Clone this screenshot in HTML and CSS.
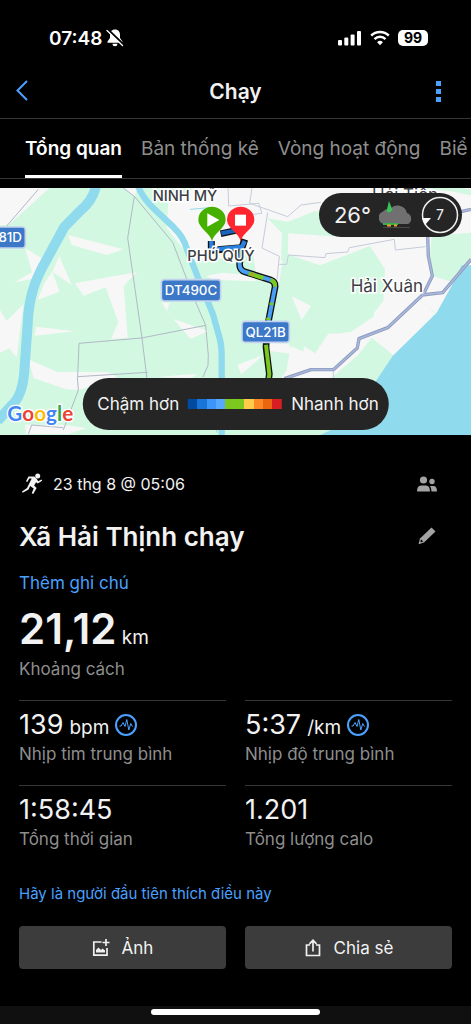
FILE: index.html
```html
<!DOCTYPE html>
<html lang="vi">
<head>
    <meta charset="UTF-8">
    <meta name="viewport" content="width=device-width, initial-scale=1.0">
    <title>Chạy</title>
    <link rel="stylesheet" href="styles.css">
</head>
<body>
    <!-- Status bar -->
    <div class="status-bar">
        <div class="status-left">
            <span>07:48</span>
            <svg width="18" height="18" viewBox="0 0 18 18">
                <path d="M9 .5c-3.200 0-5 2.200-5 5v3.500L1.500 12.600v1.200h15v-1.200L14 9V5.500c0-2.800-1.800-5-5-5zM6.500 14.800h5a2.500 2.500 0 0 1-5 0z" fill="#fff"/>
                <path d="M2 .5l15.500 15" stroke="#000" stroke-width="2"/>
                <path d="M1 1.500l15.500 15" stroke="#fff" stroke-width="1.300" stroke-linecap="round"/>
            </svg>
        </div>
        <div class="status-right">
            <svg width="24" height="16" viewBox="0 0 24 16" fill="#fff">
                <rect x="0" y="10" width="4" height="5.500" rx="1"/>
                <rect x="6.300" y="7.500" width="4" height="8" rx="1"/>
                <rect x="12.600" y="4.500" width="4" height="11" rx="1"/>
                <rect x="19" y="1" width="4" height="14.500" rx="1"/>
            </svg>
            <svg width="20" height="16" viewBox="0 0 20 16" fill="none" stroke="#fff" stroke-width="2.500">
                <path d="M1.200 5.600a12.600 12.600 0 0 1 17.600 0"/>
                <path d="M4.500 9.100a7.900 7.900 0 0 1 11 0"/>
                <path d="M10 15.200l-2.900-3a4.200 4.200 0 0 1 5.800 0z" fill="#fff" stroke="none"/>
            </svg>
            <span class="battery">99</span>
        </div>
    </div>

    <!-- Title bar -->
    <header class="nav-bar">
        <button class="icon-btn" type="button" aria-label="Quay lại">
            <svg width="28" height="22" viewBox="0 0 28 22" fill="none" stroke="#4aa1ff" stroke-width="2">
                <path d="M12 1L2.500 10.500l9.500 9.500"/>
            </svg>
        </button>
        <h1>Chạy</h1>
        <button class="icon-btn" type="button" aria-label="Thêm">
            <svg width="28" height="22" viewBox="0 0 28 22" fill="#4aa1ff">
                <rect x="8" y="1" width="5" height="5"/>
                <rect x="8" y="9" width="5" height="5"/>
                <rect x="8" y="17" width="5" height="5"/>
            </svg>
        </button>
    </header>

    <nav class="tabs">
        <a class="tab active" href="#overview">Tổng quan</a>
        <a class="tab" href="#stats">Bản thống kê</a>
        <a class="tab" href="#laps">Vòng hoạt động</a>
        <a class="tab" href="#charts">Biể</a>
    </nav>

    <!-- Map with the route, drawn at three units to the pixel -->
    <section class="map">
        <svg class="map-canvas" viewBox="0 6 1413 741" preserveAspectRatio="xMidYMid slice">
            <rect width="1413" height="750" fill="#d3f8e2"/>
            <g fill="#f8f7f7">
                <path d="M0 0h155L25 118H0z"/>
                <path d="M365 0h50l-12 32z"/>
                <path d="M204 147l116 30 50 13-50 17-105-30z"/>
                <path d="M76 187l50 30-20 60-62 12 52-30z"/>
                <path d="M178 210l37 87-58-40zM157 257l22 60-66 24 20-50z"/>
                <path d="M225 292l98-18 88-15-40 40 12 156-50 4 22-50-38-105-66 25z"/>
                <path d="M0 372l20 33 50-50-20 160-22-28-28 13z"/>
                <path d="M108 422l115 14-119 13z"/>
                <path d="M84 520l88 38 150 0 30 14-115 40-38-2-98-34z"/>
                <path d="M520 399l104 36-52 24z"/>
                <path d="M475 572l115-8-15 12z"/>
                <path d="M485 350h24l-8 25z"/>
                <path d="M75 716l110 0 75 10-55 18H78z"/>
                <path d="M505 50l90-50h818v400l-120 0-110 108-68-50-35 32-5 20-77 73-86-10-9-12 9-80 45 28v-67l95-3 70-48V250L1110 180 960 238 863 205v40l-15 15 5 62-23-30-60-9-10-80-180 25-15-20-65-82z"/>
            </g>
            <g fill="#d3f8e2">
                <path d="M803 97l62 10 80-32 30 5 45 52 15 22-170-12-2 88-20-8 3-80z"/>
                <path d="M1295 150l118-10v90l-50 60-65-20-8-60z"/>
                <path d="M1190 0h150l73 10v18l-60-12z"/>
                <path d="M1262 344l45 36-10 10-40-5z"/>
                <path d="M850 210l110 30 150-60 45 70-5 95-40 50-160 90-60-60-60-90z"/>
            </g>
            <g fill="#f8f7f7">
                <path d="M875 330l58 30-28 42z"/>
                <path d="M985 443l95-3 55-35 15-60 60 60-80 60-45 45-5 20-75 70-110-2-15-8-40-8 20-30 12-72 68 30z"/>
                <path d="M812 470l56 3 4 30-67-9z"/>
                <path d="M712 537l78-30-66 58z"/>
                <path d="M618 270l50-10 92 8 10 18-130-5z"/>
                <path d="M1195 395l70-50 40 37-125 126-65-53z"/>
            </g>
            <path d="M1115 455l65 53-55 80-30 150H960l20-150 95-82z" fill="#d3f8e2"/>
            <!-- Water -->
            <g fill="none" stroke="#90daee" stroke-linejoin="round">
                <path d="M288 0q-10 45-48 75l-47 48-50 92q-35 60-45 100-13 45-15 100l-10 140q-5 75-40 105l-40 45" stroke-width="30"/>
                <path d="M414 0q15 38 50 70l58 55q30 30 37 60l35 90 45 110 18 65q8 25 8 60v240" stroke-width="19"/>
                <path d="M570 70l60-5" stroke-width="3"/>
            </g>
            <path d="M1413 238h-28l-25 52-50 90-132 130-50 75-28 60-60 65-90 42h463z" fill="#90daee"/>
            <!-- Minor roads -->
            <g fill="none" stroke="#b0b9c6" stroke-width="3">
                <path d="M370 6l33 25-20 125 43 300 18 147M403 31l115 138 68 177 31 72-192 38-188 16-4 100 210-13M115 10L20 120M617 418l8 90-1 30-15 35M232 572l3 40-45 120M85 745l10-28 95 8"/>
            </g>
            <g fill="none" stroke="#c5ccda" stroke-width="3">
                <path d="M684 0l2 60 90-8 10 30-82 10M757 0l-8 52 114 40 40-35 60-8M803 80l-17 106 52 25-8 80M838 235h22l5-28 110 8 3-12 65-5 5-13 135-25 3 32 90-10M1000 550v30M650 740v-30"/>
            </g>
            <!-- Main road -->
            <g fill="none" stroke="#8c9ac0" stroke-width="10" stroke-linejoin="round">
                <path d="M1283 150l2 60 12 60-27 55-107 100-86 33-5 28-72 65h-67l-80 27M1265 327l63-7 85-100M1370 80l43-10"/>
                <path d="M1283 150l2 60 12 60-27 55-107 100-86 33-5 28-72 65h-67l-80 27M1265 327l63-7 85-100M1370 80l43-10" stroke="#a9b7d9" stroke-width="5"/>
            </g>
            <!-- Route -->
            <g fill="none" stroke-linejoin="round">
                <path d="M662 143l55-12" stroke="#111" stroke-width="20"/>
                <path d="M664 142l50-10" stroke="#1765bd" stroke-width="13"/>
                <path d="M634 165v28l92-8 8-25" stroke="#111" stroke-width="21"/>
                <path d="M634 165v26l92-8 8-18" stroke="#2a80dd" stroke-width="13"/>
                <path d="M724 190l-5 42q-2 20 17 26l76 24q15 5 13 22l-25 130-2 50 10 80-4 30" stroke="#111" stroke-width="20"/>
                <path d="M724 190l-5 42q-2 20 17 26l76 24q15 5 13 22l-25 130-2 36" stroke="#4a9ff5" stroke-width="12"/>
                <path d="M746 262l44 14M812 282q15 5 13 20M815 350l-1 7M805 395l-1 7M798 476l10 88-4 30" stroke="#7cc81e" stroke-width="12"/>
                <path d="M754 264l6 2" stroke="#c59432" stroke-width="12"/>
            </g>
            <!-- Place names -->
            <g class="place">
                <text x="458" y="46" class="place-small">NINH MỸ</text>
                <text x="562" y="224" class="place-small">PHÚ QUÝ</text>
                <text x="1052" y="318">Hải Xuân</text>
                <text x="1116" y="46">Hải Tiến</text>
            </g>
            <!-- Road signs -->
            <g class="sign">
                <rect x="-36" y="123" width="112" height="63" rx="9"/>
                <rect x="484" y="281" width="178" height="64" rx="9"/>
                <rect x="726" y="406" width="142" height="63" rx="9"/>
                <text x="66" y="169" text-anchor="end">81D</text>
                <text x="573" y="328" text-anchor="middle">DT490C</text>
                <text x="797" y="452" text-anchor="middle">QL21B</text>
            </g>
            <!-- Start and finish pins -->
            <path d="M636 166c-4-24-41-40-41-64a41 40 0 0 1 82 0c0 24-37 40-41 64z" fill="#46b000"/>
            <path d="M622 82l36 20-36 20z" fill="#fff"/>
            <path d="M722 166c-4-24-41-40-41-64a41 40 0 0 1 82 0c0 24-37 40-41 64z" fill="#ff2630"/>
            <rect x="705" y="86" width="33" height="33" fill="#fff"/>
            <text class="google" x="22" y="706"><tspan fill="#4285f4">G</tspan><tspan fill="#ea4335">o</tspan><tspan fill="#fbbc05">o</tspan><tspan fill="#4285f4">g</tspan><tspan fill="#34a853">l</tspan><tspan fill="#ea4335">e</tspan></text>
        </svg>

        <div class="weather">
            <span>26°</span>
            <svg width="34" height="30" viewBox="0 0 34 30">
                <path d="M5 24a6.500 6.500 0 0 1-1-12.500 6 6 0 0 1 7-2 9.500 9.500 0 0 1 17 3.500 6 6 0 0 1 1 11z" fill="#707070"/>
                <path d="M10 1l3.500 9-3 2.500-3-1z" fill="#39c558"/>
                <path d="M4 24h15" stroke="#33b24b" stroke-width="2"/>
                <path d="M8 25.500h4M15 25.500h3" stroke="#f39b2d" stroke-width="2"/>
                <path d="M4 27.500h27" stroke="#484848"/>
            </svg>
            <svg width="38" height="38" viewBox="0 0 38 38">
                <circle cx="19" cy="19" r="17.500" fill="none" stroke="#eee" stroke-width="1.500"/>
                <path d="M1 22l9 0-6 7z" fill="#fff"/>
                <text class="wind" x="19" y="24" text-anchor="middle">7</text>
            </svg>
        </div>

        <div class="legend">
            <span>Chậm hơn</span>
            <div class="pace-scale"></div>
            <span>Nhanh hơn</span>
        </div>
    </section>

    <main class="details">
        <div class="row activity">
            <svg width="22" height="22" viewBox="0 0 22 22" fill="#f2f2f2">
                <circle cx="15.700" cy="3" r="2.500"/>
                <path d="M6.500 3.500l5.800 0 2.400 2.200 1.500 2.600 3.200-1.800.8 1.300-4.500 2.700-1.600-1.300-2 3.200 2.500 2.600-3.300 6-1.600-.8 2-4.600-3.600-2.600-1.500 3.500-5.900 3.200-.7-1.100 5-3.500L7.500 10l2.200-4.500H7.300L5.300 9 4 8.300z"/>
            </svg>
            <span class="date">23 thg 8 @ 05:06</span>
            <button class="icon-btn" type="button" aria-label="Quyền riêng tư">
                <svg width="20" height="16" viewBox="0 0 20 16" fill="#a3a3a3">
                    <circle cx="6.500" cy="4" r="3.600"/>
                    <circle cx="15" cy="5.500" r="2.700"/>
                    <path d="M0 15.500q0-6 4-6h5q4 0 4 6zM13 10h3.500q3.500 0 3.500 5.500h-5.500q0-3.500-1.500-5.500z"/>
                </svg>
            </button>
        </div>

        <div class="row title-row">
            <h2>Xã Hải Thịnh chạy</h2>
            <button class="icon-btn" type="button" aria-label="Sửa tên">
                <svg width="20" height="18" viewBox="0 0 20 18" fill="#a3a3a3">
                    <path d="M14.500 0.500l4 4L7 15.500l-5.500 1.700L3 11.500z"/>
                    <path d="M4.200 12.500l2 2-2 .7-.9-.9z" fill="#000"/>
                </svg>
            </button>
        </div>

        <a class="note-link" href="#note">Thêm ghi chú</a>

        <div class="distance"><strong>21,12</strong> km</div>
        <div class="label">Khoảng cách</div>

        <div class="stats">
            <div class="stat">
                <div class="value"><b>139</b> bpm
                    <svg class="pulse" width="22" height="22" viewBox="0 0 22 22">
                        <circle cx="11" cy="11" r="10"/>
                        <path d="M4.500 12h1.500l2-3.500 2 4L11.800 5.500l2 10.500 2-6.500 1.700 3"/>
                    </svg>
                </div>
                <div class="label">Nhịp tim trung bình</div>
            </div>
            <div class="stat">
                <div class="value"><b>5:37</b> /km
                    <svg class="pulse" width="22" height="22" viewBox="0 0 22 22">
                        <circle cx="11" cy="11" r="10"/>
                        <path d="M4.500 12h1.500l2-3.500 2 4L11.800 5.500l2 10.500 2-6.500 1.700 3"/>
                    </svg>
                </div>
                <div class="label">Nhịp độ trung bình</div>
            </div>
            <div class="stat">
                <div class="value"><b>1:58:45</b></div>
                <div class="label">Tổng thời gian</div>
            </div>
            <div class="stat">
                <div class="value"><b>1.201</b></div>
                <div class="label">Tổng lượng calo</div>
            </div>
        </div>

        <a class="like-link" href="#like">Hãy là người đầu tiên thích điều này</a>

        <div class="actions">
            <button class="action-btn" type="button">
                <svg width="18" height="18" viewBox="0 0 18 18" fill="none" stroke="#f0f0f0" stroke-width="1.700">
                    <path d="M9.500 3H1.800v13.200H15V9"/>
                    <path d="M14 0v7M10.500 3.500h7"/>
                    <path d="M4 13.500V11l2.500-2.500 2.500 2.500 1.500-1.500 2.500 2v2z" fill="#f0f0f0" stroke="none"/>
                </svg>
                Ảnh
            </button>
            <button class="action-btn" type="button">
                <svg width="18" height="18" viewBox="0 0 18 18" fill="none" stroke="#f0f0f0" stroke-width="1.700">
                    <path d="M6 6H2.500v10.500h13V6H12M9 12.500V1.500M5.500 4.800L9 1.300l3.500 3.500"/>
                </svg>
                Chia sẻ
            </button>
        </div>
    </main>

    <footer class="home-bar"><div class="home-indicator"></div></footer>
</body>
</html>
```

FILE: styles.css
```css
/* Global styles */
* {
    box-sizing: border-box;
}

body {
    font-family: Inter, "Liberation Sans", sans-serif;
    margin: 0;
    min-height: 100vh;
    display: flex;
    flex-direction: column;
    background-color: #000;
    color: #f2f2f2;
    overflow-x: hidden;
}

svg {
    display: block;
    flex-shrink: 0;
}

a {
    color: #4aa1ff;
    text-decoration: none;
}

button {
    font-family: inherit;
    color: inherit;
    border: none;
    cursor: pointer;
}

.icon-btn {
    background: none;
    padding: 0;
}

/* Status bar */
.status-bar {
    height: 64px;
    padding: 12px 43px 0 49px;
    display: flex;
    justify-content: space-between;
    align-items: center;
    color: #fff;
}

.status-left,
.status-right {
    display: flex;
    align-items: center;
}

.status-left {
    gap: 4px;
    font-size: 19px;
    font-weight: 600;
}

.status-right {
    gap: 8px;
}

.battery {
    width: 30px;
    height: 16px;
    line-height: 16px;
    border-radius: 5px;
    background-color: #fff;
    color: #000;
    font-size: 14px;
    font-weight: 700;
    text-align: center;
}

/* Title bar */
.nav-bar {
    height: 55px;
    padding: 0 15px;
    display: flex;
    justify-content: space-between;
    align-items: center;
    border-bottom: 1px solid #363636;
}

h1 {
    margin: 0;
    font-size: 21px;
    font-weight: 600;
}

/* Tabs */
.tabs {
    height: 60px;
    padding-left: 25px;
    margin-bottom: 9px;
    display: flex;
    gap: 19px;
    border-bottom: 1px solid #363636;
    overflow: hidden;
    white-space: nowrap;
}

.tab {
    padding-top: 4px;
    line-height: 52px;
    font-size: 19px;
    color: #8e8e8e;
}

.tab.active {
    color: #fff;
    font-weight: 600;
    border-bottom: 3px solid #fff;
}

/* Map */
.map {
    position: relative;
}

.map-canvas {
    width: 100%;
    height: 247px;
}

.place {
    font-size: 51px;
    fill: #3c3e43;
    stroke: #fff;
    stroke-width: 9px;
    paint-order: stroke;
}

.place-small {
    font-size: 44px;
    font-weight: 500;
}

.sign rect {
    fill: #3c78c8;
    stroke: #c3d3ee;
    stroke-width: 5px;
}

.sign text {
    font-size: 40px;
    font-weight: 500;
    fill: #fff;
}

.google {
    font-family: Lato, sans-serif;
    font-size: 62px;
    font-weight: 700;
    stroke: #fff;
    stroke-width: 8px;
    paint-order: stroke;
}

.weather {
    position: absolute;
    top: 5px;
    right: 9px;
    height: 44px;
    padding: 0 3px 0 15px;
    display: flex;
    align-items: center;
    gap: 8px;
    border-radius: 22px;
    background-color: #252525;
    font-size: 22px;
}

.wind {
    font-size: 14px;
    fill: #f2f2f2;
}

.legend {
    position: absolute;
    bottom: 5px;
    left: 50%;
    transform: translateX(-50%);
    height: 52px;
    padding: 0 10px 0 15px;
    display: flex;
    align-items: center;
    gap: 9px;
    border-radius: 26px;
    background-color: #252525;
    font-size: 17px;
    white-space: nowrap;
}

/* Ten steps from slow to fast */
.pace-scale {
    width: 94px;
    height: 10px;
    background: linear-gradient(to right,
        #004a9f 0 10%, #1976d8 10% 20%, #3c96fa 20% 30%, #58a8ff 30% 40%,
        #7cc81e 40% 60%, #ffcb4b 60% 70%, #fc8b26 70% 80%, #ec6611 80% 90%, #d81e22 90%);
}

/* Activity details */
.details {
    padding: 32px 19px 0;
    display: flex;
    flex-direction: column;
    flex: 1;
}

.row {
    padding-right: 15px;
    display: flex;
    align-items: center;
}

.activity {
    height: 34px;
    padding-left: 3px;
    gap: 9px;
    font-size: 16px;
}

.date {
    flex: 1;
}

.title-row {
    height: 70px;
    justify-content: space-between;
}

h2 {
    margin: 0;
    font-size: 26px;
    font-weight: 600;
}

.note-link {
    font-size: 17px;
    line-height: 24px;
}

.distance {
    margin-top: 8px;
    font-size: 19px;
    line-height: 52px;
    height: 54px;
}

.distance strong {
    font-size: 42px;
    font-weight: 600;
}

.label {
    font-size: 17px;
    line-height: 24px;
    color: #8e8e8e;
}

/* Stats grid */
.stats {
    margin-top: 19px;
    display: grid;
    grid-template-columns: 1fr 1fr;
    column-gap: 19px;
}

.stat {
    height: 85px;
    padding-top: 6px;
    border-top: 1px solid #363636;
}

.value {
    height: 35px;
    display: flex;
    align-items: baseline;
    gap: 6px;
    font-size: 19px;
    line-height: 35px;
}

.value b {
    font-size: 27px;
    font-weight: 400;
}

.pulse {
    align-self: center;
    fill: none;
    stroke: #4aa1ff;
    stroke-width: 2px;
}

.pulse path {
    stroke-width: 1px;
}

.like-link {
    margin-top: 12px;
    font-size: 15px;
    line-height: 24px;
}

/* Bottom buttons */
.actions {
    margin-top: 20px;
    display: grid;
    grid-template-columns: 1fr 1fr;
    gap: 19px;
}

.action-btn {
    height: 43px;
    display: flex;
    justify-content: center;
    align-items: center;
    gap: 12px;
    border-radius: 4px;
    background-color: #3c3c3c;
    font-size: 17px;
}

.home-bar {
    height: 18px;
    padding-top: 3px;
    background-color: #101010;
}

.home-indicator {
    width: 36%;
    height: 6px;
    margin: 0 auto;
    border-radius: 3px;
    background-color: #fff;
}
```
